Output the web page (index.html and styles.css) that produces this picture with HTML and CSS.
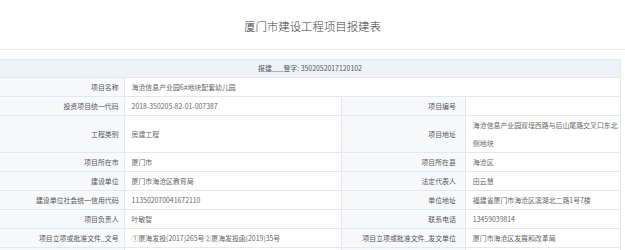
FILE: index.html
```html
<!DOCTYPE html>
<html lang="zh-CN">
<head>
<meta charset="utf-8">
<title>厦门市建设工程项目报建表</title>
<link rel="stylesheet" href="styles.css">
</head>
<body>
<div class="page">
  <div class="title-bar"><h1 class="title">厦门市建设工程项目报建表</h1></div>
  <table class="form-table">
    <colgroup>
      <col class="c-label"><col class="c-value"><col class="c-label"><col class="c-value2">
    </colgroup>
    <tr class="head-row"><td colspan="4">报建___登字: 3502052017120102</td></tr>
    <tr><td class="lbl">项目名称</td><td class="val" colspan="3">海沧信息产业园6#地块配套幼儿园</td></tr>
    <tr><td class="lbl">投资项目统一代码</td><td class="val">2018-350205-82-01-007387</td><td class="lbl lbl-r">项目编号</td><td class="val"></td></tr>
    <tr><td class="lbl">工程类别</td><td class="val">房建工程</td><td class="lbl lbl-r">项目地址</td><td class="val">海沧信息产业园双埕西路与后山尾路交叉口东北侧地块</td></tr>
    <tr><td class="lbl">项目所在市</td><td class="val">厦门市</td><td class="lbl lbl-r">项目所在县</td><td class="val">海沧区</td></tr>
    <tr><td class="lbl">建设单位</td><td class="val">厦门市海沧区教育局</td><td class="lbl lbl-r">法定代表人</td><td class="val">田云慧</td></tr>
    <tr><td class="lbl">建设单位社会统一信用代码</td><td class="val">113502070041672110</td><td class="lbl lbl-r">单位地址</td><td class="val">福建省厦门市海沧区滨湖北二路1号7楼</td></tr>
    <tr><td class="lbl">项目负责人</td><td class="val">叶敏智</td><td class="lbl lbl-r">联系电话</td><td class="val">13459039814</td></tr>
    <tr><td class="lbl">项目立项或批准文件_文号</td><td class="val">①厦海发投[2017]265号②厦海发投函[2019]35号</td><td class="lbl lbl-r">项目立项或批准文件_发文单位</td><td class="val">厦门市海沧区发展和改革局</td></tr>
    <tr><td class="lbl">&nbsp;</td><td class="val"></td><td class="lbl lbl-r"></td><td class="val"></td></tr>
  </table>
</div>
</body>
</html>
```
FILE: styles.css
```css
html, body {
  margin: 0;
  padding: 0;
  background: #ffffff;
}
body {
  font-family: "Noto Sans CJK SC", "Noto Sans", sans-serif;
  color: #666;
  overflow: hidden;
}
.page {
  width: 625px;
}
.title-bar {
  height: 49px;
  border-bottom: 1px solid #ececec;
  display: flex;
  align-items: center;
  justify-content: center;
  margin-bottom: 9px;
}
.title {
  margin: 0;
  padding-top: 2px;
  font-size: 11.4px;
  font-weight: 300;
  color: #3a3a3a;
  line-height: 14px;
}
.form-table {
  width: 621px;
  border-collapse: collapse;
  table-layout: fixed;
  font-size: 6.9px;
}
.c-label { width: 20%; }
.c-value { width: 35%; }
.c-value2 { width: 25%; }
.form-table td {
  border: 1px solid #e6e8eb;
  line-height: 18px;
  padding: 0;
  vertical-align: middle;
}
.form-table td:first-child { border-left: none; }
.head-row td {
  background: #eef3f9;
  text-align: center;
  line-height: 17px;
  color: #555;
}
.lbl {
  background: #f7f9fb;
  text-align: right;
  padding-right: 5px !important;
  color: #555;
}
.lbl-r {
  padding-right: 9px !important;
}
.val {
  background: #fff;
  text-align: left;
  padding-left: 7px !important;
  padding-right: 0 !important;
  color: #666;
}
```
